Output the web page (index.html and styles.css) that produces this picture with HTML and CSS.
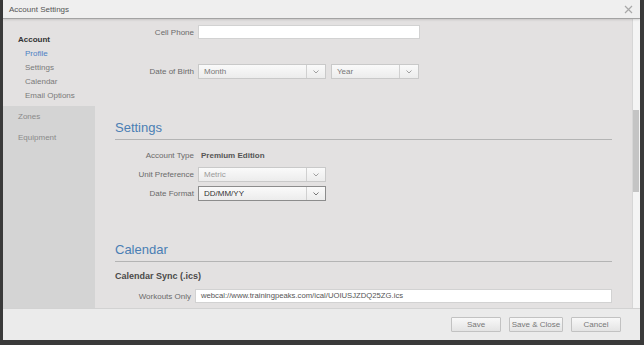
FILE: index.html
```html
<!DOCTYPE html>
<html lang="en">
<head>
  <meta charset="UTF-8">
  <meta name="viewport" content="width=device-width, initial-scale=1.0">
  <title>Account Settings</title>
  <link rel="stylesheet" href="styles.css">
</head>
<body>
  <div class="dialog">
    <div class="titlebar">
      <span class="title">Account Settings</span>
      <svg class="close" width="9" height="9" viewBox="0 0 9 9">
        <path d="M1 1 L8 8 M8 1 L1 8" stroke="#a8a8a8" stroke-width="1.2" fill="none"/>
      </svg>
    </div>

    <div class="dialog-body">
      <nav class="sidebar">
        <div class="nav-group">
          <div class="nav-head">Account</div>
          <div class="nav-sub current">Profile</div>
          <div class="nav-sub">Settings</div>
          <div class="nav-sub">Calendar</div>
          <div class="nav-sub">Email Options</div>
        </div>
        <div class="nav-item">Zones</div>
        <div class="nav-item">Equipment</div>
      </nav>

      <main class="content">
        <div class="row">
          <label class="label">Cell Phone</label>
          <div class="input"></div>
        </div>
        <div class="row row-dob">
          <label class="label">Date of Birth</label>
          <div class="select select-month">
            <span class="select-text">Month</span>
            <span class="select-arrow"><svg width="6" height="4" viewBox="0 0 6 4"><path d="M0.5 0.5 L3 3 L5.5 0.5" stroke="#a0a0a0" fill="none"/></svg></span>
          </div>
          <div class="select select-year">
            <span class="select-text">Year</span>
            <span class="select-arrow"><svg width="6" height="4" viewBox="0 0 6 4"><path d="M0.5 0.5 L3 3 L5.5 0.5" stroke="#a0a0a0" fill="none"/></svg></span>
          </div>
        </div>

        <h2 class="section-title">Settings</h2>
        <div class="row row-first">
          <label class="label">Account Type</label>
          <span class="value">Premium Edition</span>
        </div>
        <div class="row row-tight">
          <label class="label">Unit Preference</label>
          <div class="select select-month disabled">
            <span class="select-text">Metric</span>
            <span class="select-arrow"><svg width="6" height="4" viewBox="0 0 6 4"><path d="M0.5 0.5 L3 3 L5.5 0.5" stroke="#a0a0a0" fill="none"/></svg></span>
          </div>
        </div>
        <div class="row row-tight">
          <label class="label">Date Format</label>
          <div class="select select-month focused">
            <span class="select-text">DD/MM/YY</span>
            <span class="select-arrow"><svg width="6" height="4" viewBox="0 0 6 4"><path d="M0.5 0.5 L3 3 L5.5 0.5" stroke="#777" fill="none"/></svg></span>
          </div>
        </div>

        <h2 class="section-title">Calendar</h2>
        <div class="sub-title">Calendar Sync (.ics)</div>
        <div class="row row-url">
          <label class="label label-narrow">Workouts Only</label>
          <div class="input input-wide">webcal://www.trainingpeaks.com/ical/UOIUSJZDQ25ZG.ics</div>
        </div>
      </main>

      <div class="scrollbar"><div class="thumb"></div></div>
    </div>

    <div class="footer">
      <button class="btn btn-save">Save</button>
      <button class="btn btn-save-close">Save &amp; Close</button>
      <button class="btn btn-cancel">Cancel</button>
    </div>
  </div>
</body>
</html>
```

FILE: styles.css
```css
* {
  box-sizing: border-box;
}
body {
  margin: 0;
  width: 644px;
  height: 345px;
  padding: 0 4px 5px 3px;
  background: #3a3a3a;
  font-family: "Liberation Sans", Arial, sans-serif;
  font-size: 8px;
  color: #666;
  overflow: hidden;
}
.dialog {
  display: flex;
  flex-direction: column;
  height: 340px;
  background: #e3e1e1;
}
.titlebar {
  display: flex;
  align-items: center;
  justify-content: space-between;
  height: 19px;
  padding: 0 7px 0 6px;
  background: #efefef;
  border-bottom: 1px solid #a3a3a3;
  box-shadow: 0 1px 2px rgba(0, 0, 0, 0.12);
  position: relative;
  z-index: 1;
}
.title {
  color: #555;
  font-size: 8px;
}
.dialog-body {
  display: flex;
  flex: 1;
  min-height: 0;
}
.sidebar {
  width: 92px;
  background: #d4d4d4;
}
.nav-group {
  background: #e3e1e1;
  padding: 14px 0 3px;
  line-height: 14px;
}
.nav-head {
  padding-left: 15px;
  font-weight: bold;
  color: #333;
}
.nav-sub {
  padding-left: 22px;
  color: #7a7a7a;
}
.nav-sub.current {
  color: #4c80c4;
}
.nav-item {
  padding-left: 15px;
  line-height: 21px;
  color: #8a8a8a;
}
.content {
  flex: 1;
  padding: 6px 20px 0 20px;
  overflow: hidden;
}
.row {
  display: flex;
  align-items: center;
  height: 14px;
}
.row-dob {
  margin-top: 25px;
  height: 15px;
}
.row-first {
  margin-top: 8px;
  height: 15px;
}
.row-tight {
  margin-top: 4px;
  height: 15px;
}
.row-url {
  margin-top: 6px;
}
.label {
  width: 79px;
  margin-right: 4px;
  text-align: right;
  color: #6a6a6a;
  white-space: nowrap;
}
.label-narrow {
  width: 76px;
}
.input {
  width: 222px;
  height: 14px;
  background: #fff;
  border: 1px solid #d2d2d2;
  line-height: 12px;
  padding-left: 5px;
  font-size: 7.7px;
  color: #555;
  white-space: nowrap;
}
.input-wide {
  flex: 1;
}
.select {
  display: flex;
  height: 15px;
  background: linear-gradient(#fafafa, #ececec);
  border: 1px solid #c9c9c9;
  line-height: 13px;
}
.select-month {
  width: 128px;
}
.select-year {
  width: 88px;
  margin-left: 5px;
}
.select-text {
  flex: 1;
  padding-left: 5px;
  color: #777;
}
.select-arrow {
  display: flex;
  align-items: center;
  justify-content: center;
  width: 19px;
  border-left: 1px solid #d0d0d0;
}
.select.disabled .select-text {
  color: #9a9a9a;
}
.select.focused {
  border-color: #8c8c8c;
}
.select.focused .select-text {
  color: #333;
}
.value {
  margin-left: 3px;
  font-weight: bold;
  color: #555;
}
.section-title {
  margin: 41px 0 0;
  padding-bottom: 3px;
  font-size: 13px;
  line-height: 16px;
  font-weight: normal;
  color: #4a7eb4;
  border-bottom: 1px solid #b4b4b4;
}
.sub-title {
  margin-top: 7px;
  line-height: 14px;
  font-size: 9px;
  font-weight: bold;
  color: #4a4a4a;
}
.scrollbar {
  width: 8px;
  background: #f4f4f4;
  border-left: 1px solid #d6d6d6;
}
.thumb {
  margin: 91px 1px 0 0;
  height: 82px;
  background: #c4c4c4;
}
.footer {
  display: flex;
  justify-content: flex-end;
  align-items: flex-start;
  gap: 8px;
  height: 32px;
  padding: 8px 19px 0 0;
  background: #ebebeb;
  border-top: 1px solid #d2d2d2;
}
.btn {
  height: 15px;
  padding: 0;
  font-family: "Liberation Sans", Arial, sans-serif;
  font-size: 8px;
  color: #777;
  background: linear-gradient(#f8f8f8, #e4e4e4);
  border: 1px solid #c2c2c2;
  border-radius: 1px;
}
.btn-save, .btn-cancel {
  width: 50px;
}
.btn-save-close {
  width: 54px;
}
```
